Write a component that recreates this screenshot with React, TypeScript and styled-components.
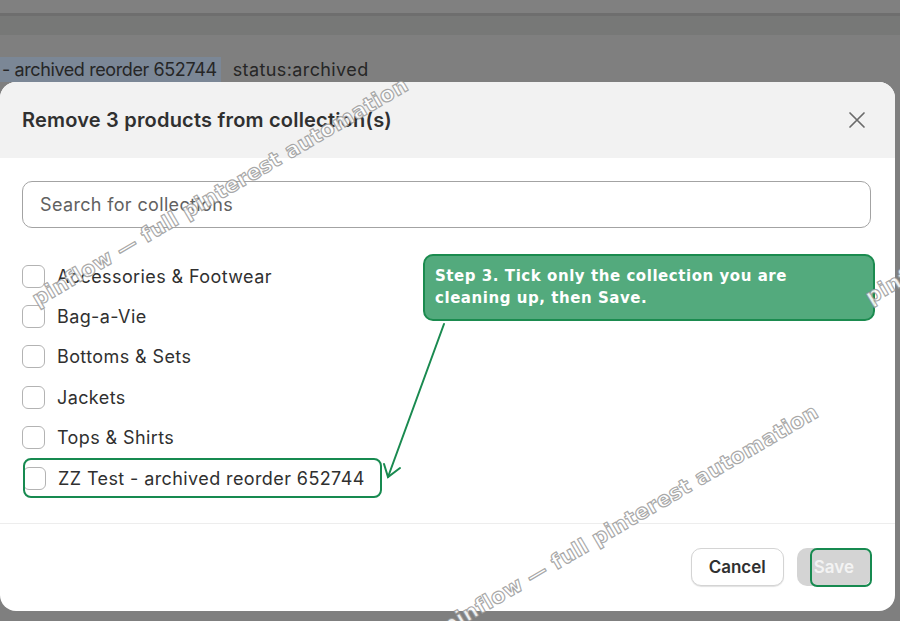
import React from "react";
import styled, { createGlobalStyle } from "styled-components";

const GlobalStyle = createGlobalStyle`
  html, body {
    margin: 0;
    padding: 0;
    background: #7f7f7f;
    font-family: Inter, "Noto Sans", "Liberation Sans", sans-serif;
    overflow: hidden;
  }
`;

const Page = styled.div`
  position: relative;
  width: 900px;
  height: 621px;
  overflow: hidden;
  background: #7f7f7f;
`;

const Band = styled.div<{ $h: number; $bg: string }>`
  height: ${(p) => p.$h}px;
  background: ${(p) => p.$bg};
`;

const FilterRow = styled.div`
  display: flex;
  align-items: center;
  gap: 12px;
  padding: 21px 0 0 0;
  height: 26px;
  font-size: 18px;
  color: #262626;
`;

const Selected = styled.span`
  background: #7b8796;
  line-height: 25px;
  padding: 0 4px 0 2px;
  letter-spacing: -0.4px;
`;

const Status = styled.span`
  letter-spacing: 0.4px;
`;

const Modal = styled.div`
  width: 895px;
  height: 529px;
  background: #fff;
  border-radius: 16px;
  overflow: hidden;
  display: flex;
  flex-direction: column;
`;

const Header = styled.div`
  height: 76px;
  flex: none;
  background: #f2f2f2;
  display: flex;
  align-items: center;
  justify-content: space-between;
  padding: 0 24px 0 22px;
`;

const Title = styled.h2`
  margin: 0;
  font-size: 20px;
  font-weight: 600;
  color: #303030;
  letter-spacing: 0.2px;
`;

const CloseButton = styled.button`
  width: 28px;
  height: 28px;
  border: 0;
  background: transparent;
  padding: 0;
  display: flex;
  align-items: center;
  justify-content: center;
  color: #6b6b6b;
`;

const Body = styled.div`
  padding: 23px 24px 25px 22px;
  border-bottom: 1px solid #ededed;
`;

const SearchBox = styled.div`
  height: 45px;
  border: 1px solid #a3a3a3;
  border-radius: 10px;
  display: flex;
  align-items: center;
  padding: 0 17px;
  font-size: 18px;
  letter-spacing: 0.35px;
  color: #616161;
`;

const List = styled.div`
  margin-top: 28px;
  display: flex;
  flex-direction: column;
`;

const Row = styled.label<{ $marked?: boolean }>`
  height: 40.4px;
  box-sizing: border-box;
  display: flex;
  align-items: center;
  gap: 12px;
  font-size: 18px;
  letter-spacing: 0.4px;
  color: #303030;
  width: ${(p) => (p.$marked ? "359px" : "auto")};
  border-radius: 8px;
  outline: ${(p) => (p.$marked ? "2px solid #178a50" : "none")};
  outline-offset: -2px;
  margin-left: ${(p) => (p.$marked ? "1px" : "0")};
`;

const Box = styled.span`
  width: 23px;
  height: 23px;
  box-sizing: border-box;
  border: 1.5px solid #b3b3b3;
  border-radius: 6px;
  background: #fff;
  flex: none;
`;

const Footer = styled.div`
  flex: 1;
  display: flex;
  justify-content: flex-end;
  align-items: flex-start;
  gap: 13px;
  padding: 24px 24px 0 0;
`;

const Button = styled.button<{ $primary?: boolean }>`
  position: relative;
  height: 38px;
  border-radius: 10px;
  font-family: inherit;
  font-size: 17px;
  font-weight: 600;
  padding: 0 17px;
  border: ${(p) => (p.$primary ? "0" : "1px solid #d4d4d4")};
  background: ${(p) => (p.$primary ? "#d4d4d4" : "#fff")};
  color: ${(p) => (p.$primary ? "#f3f3f3" : "#303030")};
  box-shadow: ${(p) => (p.$primary ? "none" : "0 1px 1px rgba(0,0,0,0.12)")};
  min-width: ${(p) => (p.$primary ? "74px" : "91px")};
`;

const SaveMark = styled.span`
  position: absolute;
  left: 13px;
  right: -1px;
  top: 0;
  bottom: -1px;
  border: 2px solid #178a50;
  border-radius: 7px;
`;

const Callout = styled.div`
  position: absolute;
  left: 423px;
  top: 254px;
  width: 452px;
  height: 67px;
  box-sizing: border-box;
  background: #53aa7d;
  border: 2px solid #1b8b4f;
  border-radius: 10px;
  padding: 9px 10px;
  font-family: "DejaVu Sans", "Liberation Sans", sans-serif;
  font-weight: bold;
  font-size: 15px;
  line-height: 22px;
  color: #fff;
  letter-spacing: 0.55px;
`;

const Arrow = styled.svg`
  position: absolute;
  left: 0;
  top: 0;
  pointer-events: none;
`;

const Watermark = styled.span<{ $x: number; $y: number }>`
  position: absolute;
  left: ${(p) => p.$x}px;
  top: ${(p) => p.$y}px;
  transform-origin: 0 100%;
  transform: rotate(-30.3deg);
  white-space: nowrap;
  font-family: "DejaVu Sans", "Liberation Sans", sans-serif;
  font-weight: bold;
  font-size: 21px;
  line-height: 24px;
  color: rgba(255, 255, 255, 0.9);
  -webkit-text-stroke: 1.2px rgba(140, 140, 140, 0.75);
  letter-spacing: 0.3px;
  pointer-events: none;
`;

const collections = [
  "Accessories & Footwear",
  "Bag-a-Vie",
  "Bottoms & Sets",
  "Jackets",
  "Tops & Shirts",
];

const WM = "pinflow — full pinterest automation";

export default function App() {
  return (
    <Page>
      <GlobalStyle />
      <Band $h={13} $bg="#808080" />
      <Band $h={3} $bg="#6e6e6e" />
      <Band $h={19} $bg="#777877" />
      <FilterRow>
        <Selected>- archived reorder 652744</Selected>
        <Status>status:archived</Status>
      </FilterRow>
      <Modal>
        <Header>
          <Title>Remove 3 products from collection(s)</Title>
          <CloseButton aria-label="Close">
            <svg width="18" height="18" viewBox="0 0 18 18">
              <path d="M2 2 L16 16 M16 2 L2 16" stroke="currentColor" strokeWidth="1.7" strokeLinecap="round" />
            </svg>
          </CloseButton>
        </Header>
        <Body>
          <SearchBox>Search for collections</SearchBox>
          <List>
            {collections.map((c) => (
              <Row key={c}>
                <Box />
                {c}
              </Row>
            ))}
            <Row $marked>
              <Box />
              ZZ Test - archived reorder 652744
            </Row>
          </List>
        </Body>
        <Footer>
          <Button>Cancel</Button>
          <Button $primary>
            Save
            <SaveMark />
          </Button>
        </Footer>
      </Modal>

      <Callout>
        Step 3. Tick only the collection you are
        <br />
        cleaning up, then Save.
      </Callout>
      <Arrow width="900" height="621" viewBox="0 0 900 621">
        <g stroke="#1a8a50" strokeWidth="2" fill="none" strokeLinecap="round">
          <line x1="444" y1="324" x2="388" y2="477" />
          <polyline points="384,464 388,477 400,468" />
        </g>
      </Arrow>

      <Watermark $x={40} $y={287}>{WM}</Watermark>
      <Watermark $x={450} $y={614}>{WM}</Watermark>
      <Watermark $x={873} $y={285}>{WM}</Watermark>
    </Page>
  );
}
